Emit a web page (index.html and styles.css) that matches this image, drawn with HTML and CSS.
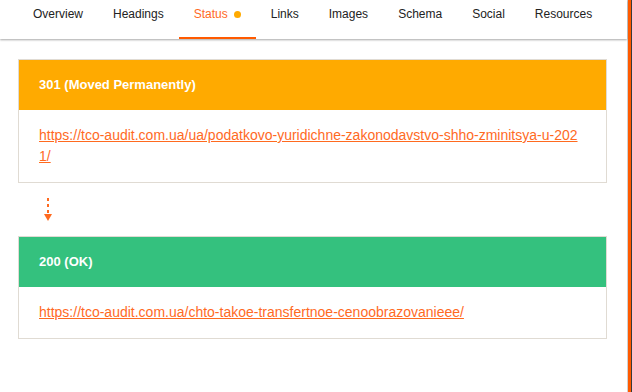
FILE: index.html
```html
<!DOCTYPE html>
<html lang="en">
<head>
  <meta charset="UTF-8">
  <meta name="viewport" content="width=device-width, initial-scale=1.0">
  <title>Status</title>
  <link rel="stylesheet" href="styles.css">
</head>
<body>
  <div class="panel">
    <nav class="tabs">
      <a class="tab" href="#">Overview</a>
      <a class="tab" href="#">Headings</a>
      <a class="tab active" href="#">Status <span class="dot"></span></a>
      <a class="tab" href="#">Links</a>
      <a class="tab" href="#">Images</a>
      <a class="tab" href="#">Schema</a>
      <a class="tab" href="#">Social</a>
      <a class="tab" href="#">Resources</a>
    </nav>

    <main class="content">
      <div class="card">
        <div class="card-head redirect">301 (Moved Permanently)</div>
        <div class="card-body">
          <a href="#">https://tco-audit.com.ua/ua/podatkovo-yuridichne-zakonodavstvo-shho-zminitsya-u-2021/</a>
        </div>
      </div>

      <!-- стрелка редиректа -->
      <div class="arrow">
        <svg width="10" height="24" viewBox="0 0 10 24">
          <line x1="5" y1="0" x2="5" y2="17" stroke="#ff6a1f" stroke-width="2" stroke-dasharray="3 3"/>
          <polygon points="1,16 9,16 5,23" fill="#ff6a1f"/>
        </svg>
      </div>

      <div class="card">
        <div class="card-head ok">200 (OK)</div>
        <div class="card-body">
          <a href="#">https://tco-audit.com.ua/chto-takoe-transfertnoe-cenoobrazovanieee/</a>
        </div>
      </div>
    </main>
  </div>
  <div class="resizer"></div>
</body>
</html>
```

FILE: styles.css
```css
* {
  margin: 0;
  padding: 0;
  box-sizing: border-box;
}

body {
  font-family: "Liberation Sans", Arial, sans-serif;
  background-color: #fff;
  color: #222;
  display: flex;
  height: 100vh;
  overflow: hidden;
}

.panel {
  flex: 1;
  border-right: 1px solid #d0d0d0;
}

.resizer {
  width: 4px;
  background-color: #ff5a00;
  border-right: 1px solid #3a3a3a;
}

/* вкладки */
.tabs {
  display: flex;
  padding-left: 18px;
  height: 39px;
  box-shadow: 0 1px 2px rgba(0, 0, 0, 0.35);
}

.tab {
  display: flex;
  align-items: flex-start;
  padding: 7px 15px 0;
  font-size: 12px;
  line-height: 14px;
  color: #222;
  text-decoration: none;
  border-bottom: 2px solid transparent;
}

.tab.active {
  color: #ff6a1f;
  border-bottom-color: #ff5a00;
}

.dot {
  display: inline-block;
  width: 7px;
  height: 7px;
  margin: 4px 0 0 6px;
  border-radius: 50%;
  background-color: #ffaa00;
}

.content {
  padding: 20px 20px 0 18px;
}

.card {
  border: 1px solid #e0dbd3;
}

.card-head {
  height: 50px;
  padding-left: 20px;
  font-size: 13px;
  font-weight: bold;
  line-height: 49px;
  color: #fff;
}

.card-head.redirect {
  background-color: #ffaa00;
}

.card-head.ok {
  background-color: #34c17e;
}

.card-body {
  padding: 15px 24px 15px 20px;
  font-size: 14px;
  line-height: 21px;
  word-break: break-all;
}

.card-body a {
  color: #ff6a1f;
}

.arrow {
  height: 53px;
  padding: 15px 0 0 25px;
}

.arrow svg {
  display: block;
}
```
